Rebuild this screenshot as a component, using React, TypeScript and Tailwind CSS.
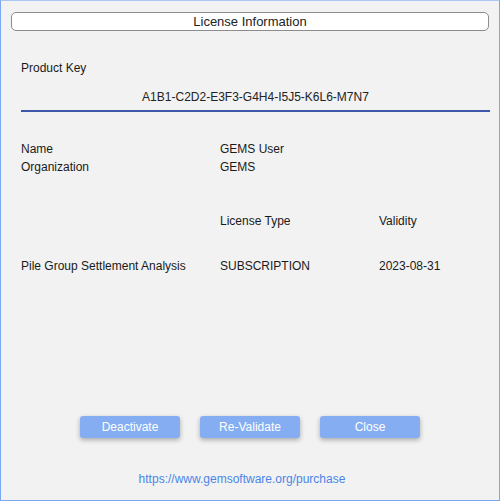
export default function App() {
  const font = { fontFamily: '"Liberation Sans", Arial, sans-serif' };
  return (
    <div
      style={font}
      className="relative flex h-[501px] w-[500px] flex-col border border-t-[#a9c6f5] border-r-[#7aa7f0] border-b-[#7aa7f0] border-l-[#7aa7f0] bg-[#f2f2f2] text-[12px] text-[#1a1a1a]"
    >
      <div className="mx-[10px] mt-[11px] flex h-[19px] items-center justify-center rounded-[5px] border border-[#8c8c8c] bg-white text-[13px] text-[#222]">
        License Information
      </div>

      <div className="mt-[28px] px-[20px]">Product Key</div>
      <div className="ml-[20px] mr-[9px] mt-[11px] border-b-2 border-[#3d58a9] pb-[4px] text-center text-[#222]">
        A1B1-C2D2-E3F3-G4H4-I5J5-K6L6-M7N7
      </div>

      <div className="mt-[28px] grid grid-cols-[199px_159px_1fr] px-[20px]">
        <div>Name</div>
        <div>GEMS User</div>
        <div />
        <div>Organization</div>
        <div>GEMS</div>
        <div />
      </div>

      <div className="mt-[36px] grid grid-cols-[199px_159px_1fr] px-[20px]">
        <div />
        <div>License Type</div>
        <div>Validity</div>
      </div>

      <div className="mt-[27px] grid grid-cols-[199px_159px_1fr] px-[20px]">
        <div>Pile Group Settlement Analysis</div>
        <div>SUBSCRIPTION</div>
        <div>2023-08-31</div>
      </div>

      <div className="mt-[141px] flex justify-center gap-[20px]">
        {['Deactivate', 'Re-Validate', 'Close'].map((b) => (
          <button
            key={b}
            className="h-[22px] w-[100px] rounded-[3px] bg-[#85aef2] text-[12px] text-white shadow-[0_2px_5px_rgba(0,0,0,0.3)]"
          >
            {b}
          </button>
        ))}
      </div>

      <div className="mt-[32px] pr-[16px] text-center text-[#4a86e8]">https://www.gemsoftware.org/purchase</div>
    </div>
  );
}
